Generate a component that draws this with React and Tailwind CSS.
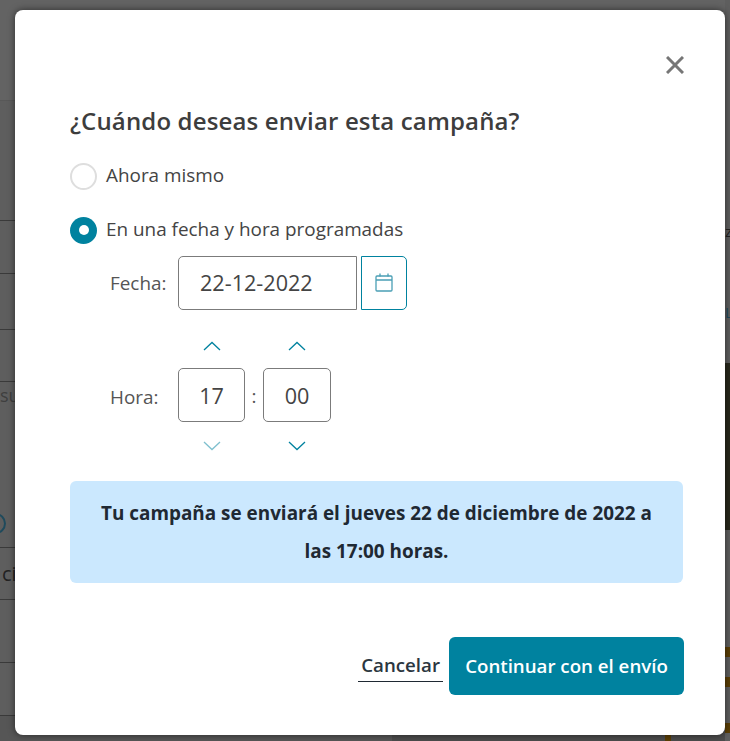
import { useState } from 'react'

function Chevron({ up, faded }) {
  return (
    <svg width="18" height="10" viewBox="0 0 18 10" fill="none" className={faded ? 'opacity-50' : ''}>
      <path d={up ? 'M1 9 9 1.5 17 9' : 'M1 1 9 8.5 17 1'} stroke="#00829f" strokeWidth="1.3" />
    </svg>
  )
}

function Radio({ checked, label }) {
  return (
    <label className="flex h-[28px] items-center gap-[9px]">
      {checked ? (
        <span className="flex h-[27px] w-[27px] items-center justify-center rounded-full bg-[#00829f]">
          <span className="h-[10px] w-[10px] rounded-full bg-white" />
        </span>
      ) : (
        <span className="h-[27px] w-[27px] rounded-full border-2 border-[#dedede] bg-white" />
      )}
      <span className="-mt-[1px] text-[18.9px] text-[#444]">{label}</span>
    </label>
  )
}

function TimeBox({ value, downFaded, wide }) {
  return (
    <div className={wide ? 'flex w-[68px] flex-col items-center' : 'flex w-[67px] flex-col items-center'}>
      <button className="mb-[17px] flex h-[10px] items-center"><Chevron up /></button>
      <div className="flex h-[54px] w-full items-center justify-center rounded-[5px] border border-[#7b7b7b] pt-[2px] text-[21.6px] text-[#444]">{value}</div>
      <button className="mt-[19px] flex h-[10px] items-center"><Chevron faded={downFaded} /></button>
    </div>
  )
}

// what shows of the page behind the dialog
function Backdrop() {
  return (
    <div className="flex h-[741px] w-[730px] overflow-hidden bg-[#5e5e5e] font-['Open_Sans',sans-serif]">
      <div className="flex w-[725px] flex-col">
        <div className="h-[101px] border-b border-[#585858] bg-[#636363]" />
        <div className="h-[120px] border-b border-[#3a3a3a]" />
        <div className="h-[53px] border-b border-[#3a3a3a]" />
        <div className="h-[56px] border-b border-[#3a3a3a]" />
        <div className="h-[52px] border-b border-[#3a3a3a]" />
        <div className="flex h-[166px] flex-col justify-between border-b border-[#3a3a3a] text-[18px] leading-[26px] text-[#3f3f3f]">
          <span>su</span>
          <span className="mb-[13px] -ml-[15px] h-[21px] w-[21px] rounded-full border-2 border-[#1f4a5c]" />
        </div>
        <div className="h-[52px] border-b border-[#3a3a3a] pl-[2px] text-[20px] leading-[52px] text-[#222]">ci</div>
        <div className="h-[63px] border-b border-[#3a3a3a]" />
        <div className="h-[53px] border-b border-[#3a3a3a]" />
        <div className="flex flex-1 justify-end bg-[#565656]">
          <div className="flex w-[333px] justify-between bg-[#4c4c4c] pr-[54px] pl-[34px]">
            <span className="h-[6px] w-[6px] rounded-full bg-[#4f3a10]" />
            <span className="h-[25px] w-[6px] bg-[#5a3e05]" />
          </div>
        </div>
      </div>
      <div className="flex w-[5px] flex-col overflow-hidden">
        <div className="mt-[224px] h-[14px] text-[15px] leading-[14px] text-[#222]">z</div>
        <div className="mt-[66px] h-[16px] text-[15px] leading-[16px] text-[#1f4a5c]">L</div>
        <div className="mt-[43px] h-[167px] shrink-0 bg-[#28281c]" />
        <div className="mt-[117px] h-[10px] shrink-0 bg-[#5a3e05]" />
        <div className="mt-[20px] h-[10px] shrink-0 bg-[#5a3e05]" />
        <div className="mt-[36px] h-[10px] shrink-0 bg-[#5a3e05]" />
      </div>
    </div>
  )
}

export default function App() {
  const [date] = useState('22-12-2022')

  return (
    <div className="relative h-[741px] w-[730px] overflow-hidden font-['Open_Sans',sans-serif]">
      <Backdrop />
      <div className="absolute top-[10px] left-[15px] h-[725px] w-[710px] rounded-[8px] bg-white pt-[42px] pr-[37px] pl-[55px] shadow-[0_0_7px_rgba(0,0,0,0.55)]">
        <div className="flex justify-end">
          <button className="flex h-[26px] w-[26px] items-center justify-center">
            <svg width="18" height="18" viewBox="0 0 18 18" fill="none">
              <path d="M1 1 17 17M17 1 1 17" stroke="#767676" strokeWidth="3" />
            </svg>
          </button>
        </div>

        <h2 className="mt-[28px] text-[24px] leading-[30px] font-semibold tracking-[0.15px] text-[#3d3d3d]">¿Cuándo deseas enviar esta campaña?</h2>

        <div className="mt-[26px] flex flex-col gap-[26px]">
          <Radio label="Ahora mismo" />
          <Radio checked label="En una fecha y hora programadas" />
        </div>

        <div className="mt-[12px] flex items-center pl-[40px]">
          <span className="w-[68px] text-[18.9px] text-[#555]">Fecha:</span>
          <div className="flex h-[54px] w-[179px] items-center rounded-l-[5px] border border-[#7b7b7b] pl-[21px] text-[21.6px] text-[#444]">{date}</div>
          <button className="ml-[4px] flex h-[54px] w-[46px] items-center justify-center rounded-r-[5px] border border-[#00829f]">
            <svg width="18" height="20" viewBox="0 0 18 20" fill="none" stroke="#4a9fb5" strokeWidth="1.3">
              <rect x="1" y="3" width="16" height="15" rx="1" />
              <path d="M1 7h16M5 0.5v3M13 0.5v3" />
            </svg>
          </button>
        </div>

        <div className="mt-[31px] flex items-center pl-[40px]">
          <span className="w-[68px] pt-[2px] text-[18.9px] text-[#555]">Hora:</span>
          <TimeBox value="17" downFaded />
          <span className="w-[18px] text-center text-[19px] text-[#555]">:</span>
          <TimeBox value="00" wide />
        </div>

        <div className="mt-[30px] flex h-[102px] w-[613px] items-center justify-center rounded-[6px] bg-[#cbe8fe] px-[20px] text-center text-[18.9px] leading-[38px] font-bold text-[#1f2933]">
          Tu campaña se enviará el jueves 22 de diciembre de 2022 a las 17:00 horas.
        </div>

        <div className="mt-[54px] flex w-[614px] items-center justify-end gap-[6px]">
          <button className="border-b border-[#1f2933] px-[3px] pb-[2px] text-[18.7px] leading-[28px] font-semibold text-[#2b3640]">Cancelar</button>
          <button className="h-[58px] w-[235px] rounded-[6px] bg-[#00829f] text-[18.7px] font-semibold text-white">Continuar con el envío</button>
        </div>
      </div>
    </div>
  )
}
